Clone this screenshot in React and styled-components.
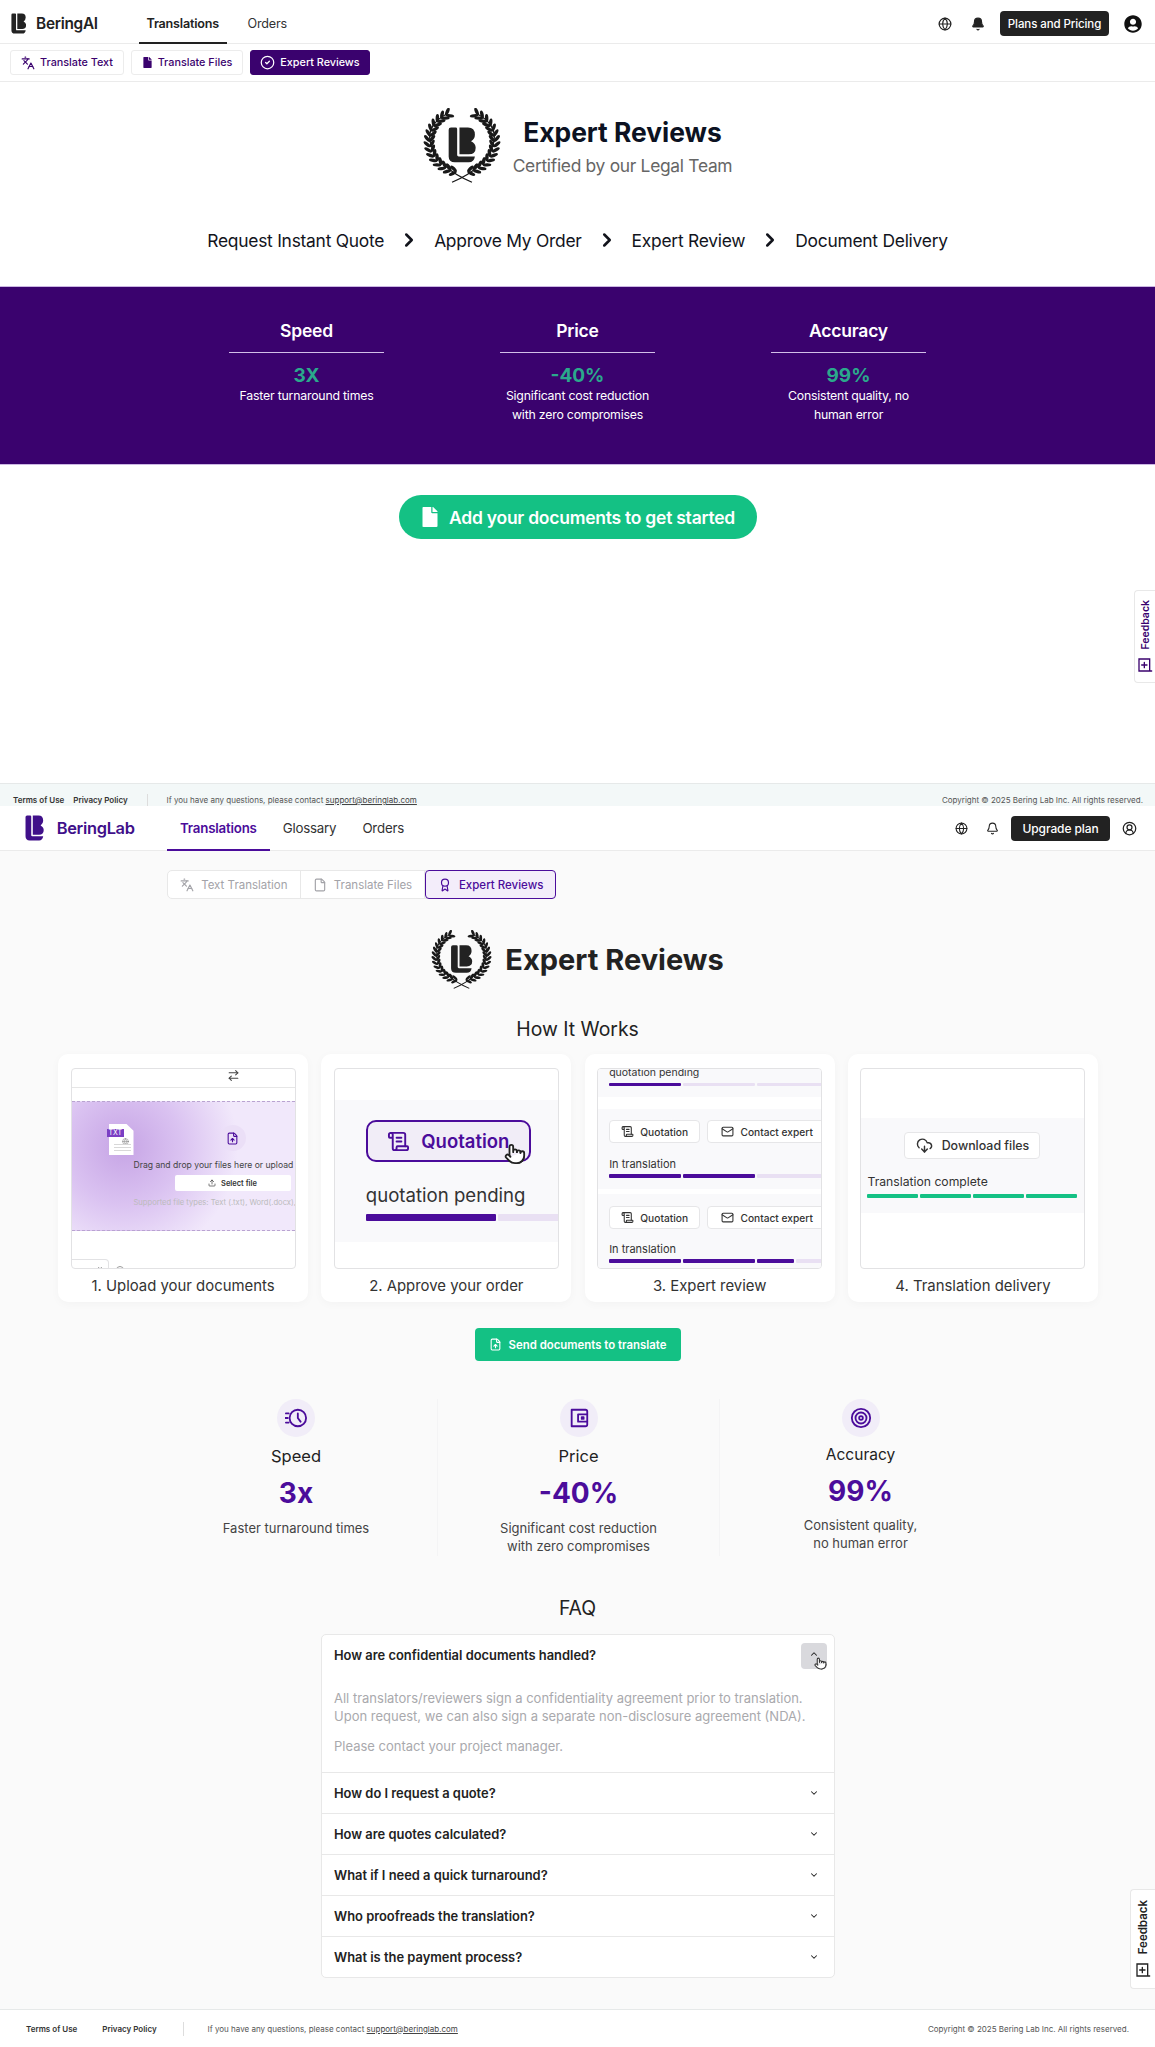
import React from 'react';
import styled, { createGlobalStyle } from 'styled-components';
import {
  ArrowRightLeft, Award, Bell, Calendar, ChevronDown, ChevronRight, ChevronUp, CircleCheck, CircleUserRound,
  CloudDownload, File, FileUp, Globe, Languages, Mail, Pointer, ScrollText, Target, Upload,
} from 'lucide-react';
import { FaFile, FaUserCircle } from 'react-icons/fa';

const PURPLE = '#3a026e';
const VIOLET = '#4b0c9b';
const GREEN = '#14c184';
const INK = '#222226';

const GlobalStyle = createGlobalStyle`
  body {
    margin: 0;
    font-family: Inter, "Liberation Sans", sans-serif;
    color: ${INK};
    background: #fff;
  }
  * { box-sizing: border-box; }
`;

const Page = styled.div`
  position: relative;
  width: 1155px;
  height: 2047px;
  overflow: hidden;
`;

const TopScreen = styled.section`
  display: flex;
  flex-direction: column;
  height: 806px;
  overflow: hidden;
  background: #fff;
`;

const BottomScreen = styled.section`
  display: flex;
  flex-direction: column;
  height: 1241px;
  background: #fafafa;
`;

/* headers */
const Header = styled.header`
  display: flex;
  align-items: stretch;
  flex: none;
  height: ${p => p.$h}px;
  padding: ${p => p.$top || 0}px ${p => p.$right}px 0 ${p => p.$left}px;
  background: #fff;
  border-bottom: 1px solid #ebebeb;
`;

const Brand = styled.div`
  display: flex;
  align-items: center;
  gap: ${p => p.$gap}px;
  width: ${p => p.$w}px;
  font-size: ${p => p.$size}px;
  font-weight: 600;
  color: ${p => p.$color};
  letter-spacing: -0.3px;
`;

const Nav = styled.nav`
  display: flex;
  gap: ${p => p.$gap}px;
`;

const NavTab = styled.a`
  display: flex;
  align-items: center;
  padding: 0 ${p => p.$pad}px;
  font-size: ${p => p.$size}px;
  letter-spacing: -0.2px;
  font-weight: ${p => (p.$active ? 600 : 400)};
  color: ${p => (p.$active ? p.$accent : '#333')};
  border-bottom: 2px solid ${p => (p.$active ? p.$accent : 'transparent')};
  margin-bottom: -1px;
`;

const HeaderTools = styled.div`
  display: flex;
  align-items: center;
  gap: ${p => p.$gap}px;
  margin-left: auto;
`;

const ToolIcon = styled.span`
  display: inline-flex;
  margin-right: ${p => p.$mr || 0}px;
  color: #222;
`;

const DarkButton = styled.button`
  width: ${p => p.$w}px;
  height: 25px;
  padding: 0;
  border: 0;
  border-radius: 4px;
  background: #222;
  color: #fff;
  font: 500 ${p => p.$size}px Inter, sans-serif;
  letter-spacing: -0.1px;
`;

/* first screen */
const SubBar = styled.div`
  display: flex;
  align-items: center;
  gap: 7px;
  flex: none;
  height: 38px;
  padding-left: 10px;
  border-bottom: 1px solid #ebebeb;
`;

const ModeButton = styled.button`
  display: flex;
  align-items: center;
  justify-content: center;
  gap: 5px;
  width: ${p => p.$w}px;
  height: 25px;
  padding: 0;
  border-radius: 3px;
  border: 1px solid ${p => (p.$active ? PURPLE : '#ececec')};
  background: ${p => (p.$active ? PURPLE : '#fff')};
  color: ${p => (p.$active ? '#fff' : PURPLE)};
  font: 500 10.8px Inter, sans-serif;
`;

const TopMain = styled.main`
  flex: 1;
`;

const Hero = styled.div`
  display: flex;
  justify-content: center;
  align-items: center;
  gap: 12px;
  margin-top: 26px;
`;

const HeroText = styled.div`
  display: flex;
  flex-direction: column;
  align-items: center;
  gap: 4px;
`;

const HeroTitle = styled.h1`
  margin: 0;
  font-size: 26.4px;
  line-height: 36px;
  font-weight: 700;
  color: #0c1222;
`;

const HeroSub = styled.div`
  font-size: 17.4px;
  line-height: 24px;
  color: #666;
  letter-spacing: -0.3px;
`;

const Steps = styled.div`
  display: flex;
  justify-content: center;
  align-items: center;
  gap: 14px;
  height: 30px;
  margin-top: 42px;
  font-size: 17.4px;
  letter-spacing: -0.25px;
  color: #12141c;
`;

const Banner = styled.div`
  display: flex;
  justify-content: center;
  gap: 116px;
  height: 179px;
  margin-top: 31px;
  padding-top: 31px;
  background: ${PURPLE};
  color: #fff;
  border-top: 1px solid #cbb7e2;
  border-bottom: 1px solid #cbb7e2;
`;

const BannerCol = styled.div`
  width: 155px;
  text-align: center;
`;

const BannerHead = styled.div`
  height: 35px;
  border-bottom: 1px solid #d2bfe8;
  font-size: 17.5px;
  font-weight: 600;
  line-height: 26px;
  letter-spacing: -0.2px;
`;

const BannerValue = styled.div`
  margin-top: 10px;
  font-size: 19px;
  line-height: 25px;
  font-weight: 700;
  color: #2ba98c;
`;

const BannerText = styled.div`
  margin: -1px -20px 0;
  font-size: 12.3px;
  line-height: 18.5px;
  letter-spacing: -0.2px;
`;

const BigCta = styled.button`
  display: flex;
  align-items: center;
  justify-content: center;
  gap: 9px;
  width: 358px;
  height: 44px;
  margin: 30px auto 0;
  padding: 0;
  border: 0;
  border-radius: 22px;
  background: ${GREEN};
  color: #fff;
  font: 600 17.5px Inter, sans-serif;
  letter-spacing: -0.25px;
`;

/* footers */
const Footer = styled.footer`
  display: flex;
  align-items: ${p => (p.$cut ? 'flex-start' : 'center')};
  flex: none;
  height: ${p => p.$h}px;
  margin-top: auto;
  padding: ${p => (p.$cut ? 10 : 0)}px ${p => p.$right}px 0 ${p => p.$left}px;
  background: ${p => p.$bg};
  border-top: 1px solid #e6e9e9;
  font-size: 8px;
  line-height: 12px;
  color: #555;
`;

const FooterLink = styled.a`
  margin-right: ${p => p.$mr}px;
  font-weight: 600;
  color: #333;
`;

const FooterRule = styled.span`
  width: 1px;
  height: 14px;
  margin-right: ${p => p.$mr}px;
  background: #ddd;
`;

const FooterMail = styled.a`
  color: #444;
  text-decoration: underline;
`;

const Copyright = styled.span`
  margin-left: auto;
`;

/* second screen */
const SegTabs = styled.div`
  display: flex;
  width: 389px;
  height: 29px;
  margin: 19px 0 0 167px;
  background: #fff;
  border: 1px solid #e8e8e8;
  border-radius: 5px;
`;

const SegTab = styled.div`
  display: flex;
  align-items: center;
  justify-content: center;
  gap: 7px;
  width: ${p => p.$w}px;
  margin: ${p => (p.$active ? '-1px -1px -1px 0' : '0')};
  font-size: 11.5px;
  font-weight: ${p => (p.$active ? 500 : 400)};
  color: ${p => (p.$active ? VIOLET : '#a3a3a8')};
  background: ${p => (p.$active ? '#f3edfa' : 'transparent')};
  border: ${p => (p.$active ? `1px solid ${VIOLET}` : '0')};
  border-right: ${p => (p.$active ? `1px solid ${VIOLET}` : '1px solid #e8e8e8')};
  border-radius: ${p => (p.$active ? '4px' : '0')};
`;

const TitleRow = styled.div`
  display: flex;
  justify-content: center;
  align-items: center;
  gap: 13px;
  margin-top: 31px;
`;

const PageTitle = styled.h1`
  margin: 0;
  font-size: 29px;
  font-weight: 700;
  color: #222;
`;

const SectionHead = styled.h2`
  margin: ${p => p.$mt}px 0 0;
  font-size: 19.4px;
  line-height: 28px;
  font-weight: 400;
  text-align: center;
  color: #222;
`;

const Cards = styled.div`
  display: grid;
  grid-template-columns: repeat(4, 250px);
  gap: 13.33px;
  margin: 11px 0 0 58px;
`;

const Card = styled.div`
  height: 248px;
  padding: 14px 12.5px 0;
  background: #fff;
  border-radius: 10px;
  box-shadow: 0 2px 10px rgba(0, 0, 0, 0.03);
`;

const Frame = styled.div`
  position: relative;
  display: flex;
  flex-direction: column;
  height: 201px;
  overflow: hidden;
  background: #fff;
  border: 1px solid #e2e2e4;
  border-radius: 4px;
  white-space: nowrap;
`;

const CardLabel = styled.div`
  height: 33px;
  font-size: 14.9px;
  line-height: 35px;
  text-align: center;
  color: #333;
`;

const SwapBar = styled.div`
  display: flex;
  justify-content: center;
  flex: none;
  height: 19px;
  padding-left: 100px;
  border-bottom: 1px solid #e6e6e6;
  color: #444;
`;

const DropZone = styled.div`
  display: flex;
  flex-direction: column;
  align-items: flex-start;
  flex: none;
  height: 130px;
  margin-top: 13px;
  padding: 23px 0 0 62px;
  border-top: 1px dashed #b9a3d1;
  border-bottom: 1px dashed #b9a3d1;
  background: radial-gradient(circle at 23% 35%, #c6a4e5 0, #dac2f1 30%, #f1e8fb 60%);
`;

const UploadBubble = styled.div`
  display: flex;
  align-items: center;
  justify-content: center;
  width: 26px;
  height: 26px;
  margin-left: 86px;
  border-radius: 50%;
  background: #ebdff7;
  color: ${VIOLET};
`;

const DropText = styled.div`
  margin-top: 7px;
  font-size: 8.6px;
  line-height: 14px;
  color: #444;
`;

const SelectFile = styled.div`
  display: flex;
  align-items: center;
  justify-content: center;
  gap: 5px;
  width: 116px;
  height: 16px;
  margin: 3px 0 0 41px;
  background: #fff;
  border-radius: 2px;
  font-size: 7.5px;
  font-weight: 600;
  color: #333;
`;

const DropHint = styled.div`
  margin-top: 6px;
  font-size: 7.6px;
  line-height: 12px;
  color: #bbb;
`;

const MiniFile = styled.div`
  position: absolute;
  left: 37px;
  top: 55px;
  width: 25px;
  height: 31px;
  color: #8a8a8a;
`;

const MiniFilePaper = styled.div`
  position: absolute;
  inset: 0;
  background: #fff;
  clip-path: polygon(0 0, 72% 0, 100% 22%, 100% 100%, 0 100%);
`;

const MiniFileTag = styled.span`
  position: absolute;
  left: -2px;
  top: 5px;
  padding: 0 2px;
  background: #7b3fc4;
  color: #fff;
  font-size: 7px;
  line-height: 8px;
`;

const MiniFileMark = styled.span`
  position: absolute;
  right: 5px;
  top: 14px;
  display: flex;
`;

const MiniFileLines = styled.div`
  position: absolute;
  left: 5px;
  right: 3px;
  bottom: 3px;
  height: 8px;
  background: repeating-linear-gradient(#d8d8d8 0 1px, transparent 1px 3px);
`;

const FrameFoot = styled.div`
  display: flex;
  align-items: flex-start;
  flex: none;
  gap: 7px;
  margin-top: 28px;
  color: #555;
`;

const FrameStub = styled.div`
  display: flex;
  justify-content: flex-end;
  flex: none;
  width: 37px;
  height: 12px;
  padding: 7px 4px 0 0;
  border: 1px solid #e2e2e4;
  border-left: 0;
  border-radius: 0 4px 0 0;
  color: #333;
`;

const FrameDot = styled.span`
  width: 8px;
  height: 8px;
  margin-top: 7px;
  border: 1px solid #999;
  border-radius: 50%;
`;

const Band = styled.div`
  display: flex;
  flex-direction: column;
  flex: none;
  height: ${p => p.$h}px;
  margin-top: ${p => p.$mt || 0}px;
  padding: ${p => p.$pt || 0}px 0 0 ${p => p.$pl || 0}px;
  background: #f9f9fb;
`;

const QuoteButton = styled.div`
  position: relative;
  display: flex;
  align-items: center;
  justify-content: center;
  gap: 11px;
  width: 165px;
  height: 42px;
  border: 2px solid ${VIOLET};
  border-radius: 10px;
  background: #f1edf7;
  color: ${VIOLET};
  font-size: 18.5px;
  font-weight: 600;
`;

const PendingText = styled.div`
  margin-top: 20px;
  font-size: 18.6px;
  line-height: 26px;
  color: #333;
`;

const Bar = styled.div`
  display: flex;
  gap: 2px;
  flex: none;
  margin-top: ${p => p.$mt || 0}px;
`;

const Seg = styled.span`
  flex: none;
  width: ${p => p.$w}px;
  height: ${p => p.$h}px;
  border-radius: 1px;
  background: ${p => p.$color};
`;

const SmallStatus = styled.div`
  margin-top: ${p => p.$mt || 0}px;
  font-size: ${p => p.$size || 11}px;
  line-height: 14px;
  color: #333;
`;

const SmallButtons = styled.div`
  display: flex;
  gap: 7px;
`;

const SmallButton = styled.div`
  display: flex;
  align-items: center;
  justify-content: center;
  flex: none;
  gap: 6px;
  width: ${p => p.$w}px;
  height: 23px;
  background: #fff;
  border: 1px solid #e6e6e8;
  border-radius: 4px;
  font-size: 10.2px;
  font-weight: 500;
  color: #333;
`;

const DownloadButton = styled.div`
  display: flex;
  align-items: center;
  justify-content: center;
  gap: 9px;
  width: 136px;
  height: 27px;
  margin-left: 37px;
  background: #fff;
  border: 1px solid #e6e6e8;
  border-radius: 4px;
  font-size: 12.4px;
  font-weight: 500;
  color: #333;
`;

const GreenCta = styled.button`
  display: flex;
  align-items: center;
  justify-content: center;
  gap: 7px;
  flex: none;
  width: 206px;
  height: 33px;
  margin: 26px auto 0;
  padding: 0;
  border: 0;
  border-radius: 4px;
  background: ${GREEN};
  color: #fff;
  font: 600 11.4px Inter, sans-serif;
`;

const Stats = styled.div`
  display: grid;
  grid-template-columns: repeat(3, 282px);
  margin: 38px 0 0 155px;
`;

const Stat = styled.div`
  display: flex;
  flex-direction: column;
  align-items: center;
  height: 157px;
  text-align: center;
  border-left: ${p => (p.$rule ? '1px solid #f4f4f5' : '0')};
`;

const StatIcon = styled.div`
  display: flex;
  align-items: center;
  justify-content: center;
  width: 38px;
  height: 38px;
  border-radius: 50%;
  background: #f1edf8;
  color: ${VIOLET};
`;

const StatLabel = styled.div`
  margin-top: ${p => (p.$small ? 6 : 7)}px;
  font-size: ${p => (p.$small ? 15.5 : 16.5)}px;
  line-height: 24px;
  color: #222;
`;

const StatValue = styled.div`
  margin-top: ${p => (p.$small ? 4 : 5)}px;
  font-size: 28px;
  line-height: 40px;
  font-weight: 700;
  color: ${VIOLET};
`;

const StatText = styled.div`
  margin-top: ${p => (p.$small ? 6 : 7)}px;
  font-size: 13px;
  line-height: 17.5px;
  color: #444;
`;

const FaqBox = styled.div`
  width: 514px;
  margin: 12px 0 0 321px;
  background: #fff;
  border: 1px solid #e8e8e8;
  border-radius: 5px;
`;

const FaqItem = styled.div`
  border-top: ${p => (p.$first ? '0' : '1px solid #e8e8e8')};
`;

const FaqRow = styled.div`
  display: flex;
  align-items: center;
  justify-content: space-between;
  height: ${p => (p.$first ? 41 : 40)}px;
  padding: 0 7px 0 12px;
  font-size: 12.9px;
  font-weight: 600;
  color: #222;
`;

const FaqToggle = styled.span`
  position: relative;
  display: flex;
  align-items: ${p => (p.$open ? 'flex-start' : 'center')};
  justify-content: center;
  width: 26px;
  height: 26px;
  padding-top: ${p => (p.$open ? 6 : 0)}px;
  border-radius: 4px;
  background: ${p => (p.$open ? '#d9d9dd' : 'transparent')};
`;

const FaqCursor = styled.span`
  position: absolute;
  left: 13px;
  top: 14px;
  display: flex;
  color: #333;
`;

const FaqBody = styled.div`
  padding: 13px 12px 17px;
  font-size: 13px;
  line-height: 18px;
  color: #a9a9ad;
`;

const FaqPara = styled.p`
  margin: 0 0 ${p => p.$mb || 0}px;
`;

const FeedbackTab = styled.div`
  position: absolute;
  right: 0;
  top: ${p => p.$top}px;
  display: flex;
  flex-direction: column;
  align-items: center;
  justify-content: center;
  gap: 8px;
  width: ${p => p.$w}px;
  height: ${p => p.$h}px;
  background: #fff;
  border: 1px solid #e8e8e8;
  border-right: 0;
  border-radius: 4px 0 0 4px;
  color: ${p => p.$color};
`;

const FeedbackText = styled.span`
  writing-mode: vertical-rl;
  transform: rotate(180deg);
  font-size: ${p => p.$size}px;
  font-weight: 600;
`;

const CursorMark = styled.span`
  position: absolute;
  left: ${p => p.$left}px;
  top: ${p => p.$top}px;
  display: flex;
  color: #222;
`;

const BeringLogo = ({ h, color }) => (
  <svg width={h * 0.72} height={h} viewBox="0 0 36 50" fill={color}>
    <path d="M1 4q0-3 3-3h6q2 0 2 2v36q0 2 2 2h21q-1 8-8 8H9q-8 0-8-8z" />
    <path d="M15 1h11q9 0 9 10 0 6-5 9 6 3 6 9 0 9-9 9H15z" />
  </svg>
);

const LEAVES = Array.from({ length: 15 }, (_, i) => {
  const phi = ((10 + i * 10) * Math.PI) / 180;
  const x = 50 - 39 * Math.sin(phi);
  const y = 45 + 39 * Math.cos(phi);
  const tangent = (Math.atan2(-Math.sin(phi), -Math.cos(phi)) * 180) / Math.PI;
  return { x, y, tangent };
});

const Branch = () => (
  <g>
    <path d="M62 97C42 88 18 72 11.5 45 9 30 17 18 31 10" fill="none" stroke="currentColor" strokeWidth="1.6" />
    {LEAVES.map(({ x, y, tangent }) => (
      <g key={tangent} transform={`translate(${x} ${y})`}>
        <ellipse cx="5" cy="0" rx="5.2" ry="2.1" transform={`rotate(${tangent + 38})`} />
        <ellipse cx="5" cy="0" rx="5.2" ry="2.1" transform={`rotate(${tangent - 38})`} />
      </g>
    ))}
  </g>
);

const Wreath = ({ w, h }) => (
  <svg width={w} height={h} viewBox="3 2 94 96" preserveAspectRatio="none" fill="#191919" color="#191919">
    <Branch />
    <g transform="translate(100 0) scale(-1 1)">
      <Branch />
    </g>
    <g transform="translate(33 26) scale(0.93)" fill="#222">
      <path d="M1 4q0-3 3-3h6q2 0 2 2v36q0 2 2 2h21q-1 8-8 8H9q-8 0-8-8z" />
      <path d="M15 1h11q9 0 9 10 0 6-5 9 6 3 6 9 0 9-9 9H15z" />
    </g>
  </svg>
);

const SpeedIcon = () => (
  <svg width="22" height="22" viewBox="0 0 24 24" fill="none" stroke="currentColor" strokeWidth="2" strokeLinecap="round">
    <circle cx="14" cy="12" r="9" />
    <path d="M14 7v5l3 4M1 7h3M0 12h3M1 17h3" />
  </svg>
);

const WalletIcon = () => (
  <svg width="22" height="22" viewBox="0 0 24 24" fill="none" stroke="currentColor" strokeWidth="2" strokeLinejoin="round">
    <path d="M21 8V5a2 2 0 0 0-2-2H4v18h15a2 2 0 0 0 2-2v-3" />
    <rect x="11" y="8" width="10" height="8" />
    <rect x="15" y="11" width="2" height="2" fill="currentColor" />
  </svg>
);

const NotePlusIcon = ({ size }) => (
  <svg width={size} height={size} viewBox="0 0 24 24" fill="none" stroke="currentColor" strokeWidth="2" strokeLinecap="round">
    <path d="M3 3h16v18H3zM19 21h3M11 8v8M7 12h8" />
  </svg>
);

const Footnotes = ({ bg, h, left, right, cut, termsGap, privacyGap, ruleGap }) => (
  <Footer $bg={bg} $h={h} $left={left} $right={right} $cut={cut}>
    <FooterLink $mr={termsGap}>Terms of Use</FooterLink>
    <FooterLink $mr={privacyGap}>Privacy Policy</FooterLink>
    <FooterRule $mr={ruleGap} />
    <span>
      If you have any questions, please contact <FooterMail>support@beringlab.com</FooterMail>
    </span>
    <Copyright>Copyright © 2025 Bering Lab Inc. All rights reserved.</Copyright>
  </Footer>
);

const FAQ = [
  'How do I request a quote?',
  'How are quotes calculated?',
  'What if I need a quick turnaround?',
  'Who proofreads the translation?',
  'What is the payment process?',
];

const on = VIOLET;
const off = '#e9e0f3';

export default function App() {
  return (
    <Page>
      <GlobalStyle />

      <TopScreen>
        <Header $h={44} $top={4} $left={11} $right={13}>
          <Brand $gap={10} $w={128} $size={15.4} $color="#222">
            <BeringLogo h={21} color="#222" />
            BeringAI
          </Brand>
          <Nav $gap={14}>
            <NavTab $active $accent="#222" $pad={7.5} $size={12.6}>Translations</NavTab>
            <NavTab $pad={7} $accent="#222" $size={12.6}>Orders</NavTab>
          </Nav>
          <HeaderTools $gap={15}>
            <ToolIcon $mr={4}><Globe size={14} /></ToolIcon>
            <ToolIcon><Bell size={14} fill="#222" /></ToolIcon>
            <DarkButton $w={109} $size={11.5}>Plans and Pricing</DarkButton>
            <ToolIcon><FaUserCircle size={18} color="#111" /></ToolIcon>
          </HeaderTools>
        </Header>

        <SubBar>
          <ModeButton $w={114}><Languages size={14} />Translate Text</ModeButton>
          <ModeButton $w={112}><FaFile size={11} />Translate Files</ModeButton>
          <ModeButton $w={120} $active><CircleCheck size={15} />Expert Reviews</ModeButton>
        </SubBar>

        <TopMain>
          <Hero>
            <Wreath w={78} h={75} />
            <HeroText>
              <HeroTitle>Expert Reviews</HeroTitle>
              <HeroSub>Certified by our Legal Team</HeroSub>
            </HeroText>
          </Hero>

          <Steps>
            Request Instant Quote
            <ChevronRight size={22} strokeWidth={2.8} />
            Approve My Order
            <ChevronRight size={22} strokeWidth={2.8} />
            Expert Review
            <ChevronRight size={22} strokeWidth={2.8} />
            Document Delivery
          </Steps>

          <Banner>
            <BannerCol>
              <BannerHead>Speed</BannerHead>
              <BannerValue>3X</BannerValue>
              <BannerText>Faster turnaround times</BannerText>
            </BannerCol>
            <BannerCol>
              <BannerHead>Price</BannerHead>
              <BannerValue>-40%</BannerValue>
              <BannerText>Significant cost reduction<br />with zero compromises</BannerText>
            </BannerCol>
            <BannerCol>
              <BannerHead>Accuracy</BannerHead>
              <BannerValue>99%</BannerValue>
              <BannerText>Consistent quality, no<br />human error</BannerText>
            </BannerCol>
          </Banner>

          <BigCta><FaFile size={20} />Add your documents to get started</BigCta>
        </TopMain>

        <Footnotes bg="#f3f8f8" h={23} left={13} right={12} cut termsGap={9} privacyGap={19} ruleGap={19} />
      </TopScreen>

      <BottomScreen>
        <Header $h={45} $left={25} $right={18}>
          <Brand $gap={13} $w={142} $size={16.4} $color="#40108a">
            <BeringLogo h={26} color="#40108a" />
            BeringLab
          </Brand>
          <Nav $gap={0}>
            <NavTab $active $accent={VIOLET} $pad={13} $size={13.3}>Translations</NavTab>
            <NavTab $pad={13} $accent={VIOLET} $size={13.3}>Glossary</NavTab>
            <NavTab $pad={13} $accent={VIOLET} $size={13.3}>Orders</NavTab>
          </Nav>
          <HeaderTools $gap={12}>
            <ToolIcon $mr={6}><Globe size={13} /></ToolIcon>
            <ToolIcon><Bell size={13} /></ToolIcon>
            <DarkButton $w={99} $size={12}>Upgrade plan</DarkButton>
            <ToolIcon><CircleUserRound size={15} /></ToolIcon>
          </HeaderTools>
        </Header>

        <SegTabs>
          <SegTab $w={133}><Languages size={14} />Text Translation</SegTab>
          <SegTab $w={125}><File size={14} />Translate Files</SegTab>
          <SegTab $w={131} $active><Award size={14} />Expert Reviews</SegTab>
        </SegTabs>

        <TitleRow>
          <Wreath w={61} h={59} />
          <PageTitle>Expert Reviews</PageTitle>
        </TitleRow>

        <SectionHead $mt={26}>How It Works</SectionHead>

        <Cards>
          <Card>
            <Frame>
              <SwapBar><ArrowRightLeft size={13} /></SwapBar>
              <DropZone>
                <UploadBubble><FileUp size={13} /></UploadBubble>
                <DropText>Drag and drop your files here or upload</DropText>
                <SelectFile><Upload size={8} />Select file</SelectFile>
                <DropHint>Supported file types: Text (.txt), Word(.docx),</DropHint>
              </DropZone>
              <MiniFile>
                <MiniFilePaper />
                <MiniFileTag>TXT</MiniFileTag>
                <MiniFileMark><Globe size={7} /></MiniFileMark>
                <MiniFileLines />
              </MiniFile>
              <FrameFoot>
                <FrameStub><Calendar size={8} /></FrameStub>
                <FrameDot />
              </FrameFoot>
            </Frame>
            <CardLabel>1. Upload your documents</CardLabel>
          </Card>

          <Card>
            <Frame>
              <Band $h={142} $mt={31} $pt={20} $pl={31}>
                <QuoteButton>
                  <ScrollText size={23} />
                  Quotation
                  <CursorMark $left={136} $top={21}><Pointer size={22} fill="#fff" /></CursorMark>
                </QuoteButton>
                <PendingText>quotation pending</PendingText>
                <Bar $mt={6}>
                  <Seg $w={130} $h={7} $color={on} />
                  <Seg $w={70} $h={7} $color={off} />
                </Bar>
              </Band>
            </Frame>
            <CardLabel>2. Approve your order</CardLabel>
          </Card>

          <Card>
            <Frame>
              <Band $h={28} $pl={11}>
                <SmallStatus $size={10.5} $mt={-3}>quotation pending</SmallStatus>
                <Bar $mt={3}>
                  <Seg $w={72} $h={3} $color={on} />
                  <Seg $w={72} $h={3} $color={off} />
                  <Seg $w={72} $h={3} $color={off} />
                </Bar>
              </Band>
              <Band $h={80} $mt={12} $pt={11} $pl={11}>
                <SmallButtons>
                  <SmallButton $w={91}><ScrollText size={13} />Quotation</SmallButton>
                  <SmallButton $w={120}><Mail size={13} />Contact expert</SmallButton>
                </SmallButtons>
                <SmallStatus $mt={14}>In translation</SmallStatus>
                <Bar $mt={3}>
                  <Seg $w={72} $h={4} $color={on} />
                  <Seg $w={72} $h={4} $color={on} />
                  <Seg $w={72} $h={4} $color={off} />
                </Bar>
              </Band>
              <Band $h={80} $mt={5} $pt={12} $pl={11}>
                <SmallButtons>
                  <SmallButton $w={91}><ScrollText size={13} />Quotation</SmallButton>
                  <SmallButton $w={120}><Mail size={13} />Contact expert</SmallButton>
                </SmallButtons>
                <SmallStatus $mt={13}>In translation</SmallStatus>
                <Bar $mt={3}>
                  <Seg $w={72} $h={4} $color={on} />
                  <Seg $w={72} $h={4} $color={on} />
                  <Seg $w={37} $h={4} $color={on} />
                  <Seg $w={33} $h={4} $color={off} />
                </Bar>
              </Band>
            </Frame>
            <CardLabel>3. Expert review</CardLabel>
          </Card>

          <Card>
            <Frame>
              <Band $h={95} $mt={49} $pt={14} $pl={6}>
                <DownloadButton><CloudDownload size={17} />Download files</DownloadButton>
                <SmallStatus $size={12.2} $mt={16}>Translation complete</SmallStatus>
                <Bar $mt={5}>
                  <Seg $w={51} $h={4} $color={GREEN} />
                  <Seg $w={51} $h={4} $color={GREEN} />
                  <Seg $w={51} $h={4} $color={GREEN} />
                  <Seg $w={51} $h={4} $color={GREEN} />
                </Bar>
              </Band>
            </Frame>
            <CardLabel>4. Translation delivery</CardLabel>
          </Card>
        </Cards>

        <GreenCta><FileUp size={13} />Send documents to translate</GreenCta>

        <Stats>
          <Stat>
            <StatIcon><SpeedIcon /></StatIcon>
            <StatLabel>Speed</StatLabel>
            <StatValue>3x</StatValue>
            <StatText>Faster turnaround times</StatText>
          </Stat>
          <Stat $rule>
            <StatIcon><WalletIcon /></StatIcon>
            <StatLabel>Price</StatLabel>
            <StatValue>-40%</StatValue>
            <StatText>Significant cost reduction<br />with zero compromises</StatText>
          </Stat>
          <Stat $rule>
            <StatIcon><Target size={22} /></StatIcon>
            <StatLabel $small>Accuracy</StatLabel>
            <StatValue $small>99%</StatValue>
            <StatText $small>Consistent quality,<br />no human error</StatText>
          </Stat>
        </Stats>

        <SectionHead $mt={38}>FAQ</SectionHead>

        <FaqBox>
          <FaqItem $first>
            <FaqRow $first>
              How are confidential documents handled?
              <FaqToggle $open>
                <ChevronUp size={10} strokeWidth={2.5} />
                <FaqCursor><Pointer size={13} fill="#fff" /></FaqCursor>
              </FaqToggle>
            </FaqRow>
            <FaqBody>
              <FaqPara $mb={12}>
                All translators/reviewers sign a confidentiality agreement prior to translation.<br />
                Upon request, we can also sign a separate non-disclosure agreement (NDA).
              </FaqPara>
              <FaqPara>Please contact your project manager.</FaqPara>
            </FaqBody>
          </FaqItem>
          {FAQ.map(question => (
            <FaqItem key={question}>
              <FaqRow>
                {question}
                <FaqToggle><ChevronDown size={10} strokeWidth={2.5} /></FaqToggle>
              </FaqRow>
            </FaqItem>
          ))}
        </FaqBox>

        <Footnotes bg="#fff" h={38} left={26} right={26} termsGap={25} privacyGap={26} ruleGap={24} />
      </BottomScreen>

      <FeedbackTab $top={590} $w={21} $h={93} $color={PURPLE}>
        <FeedbackText $size={10.5}>Feedback</FeedbackText>
        <NotePlusIcon size={16} />
      </FeedbackTab>
      <FeedbackTab $top={1889} $w={25} $h={100} $color="#222">
        <FeedbackText $size={11.5}>Feedback</FeedbackText>
        <NotePlusIcon size={16} />
      </FeedbackTab>
    </Page>
  );
}
